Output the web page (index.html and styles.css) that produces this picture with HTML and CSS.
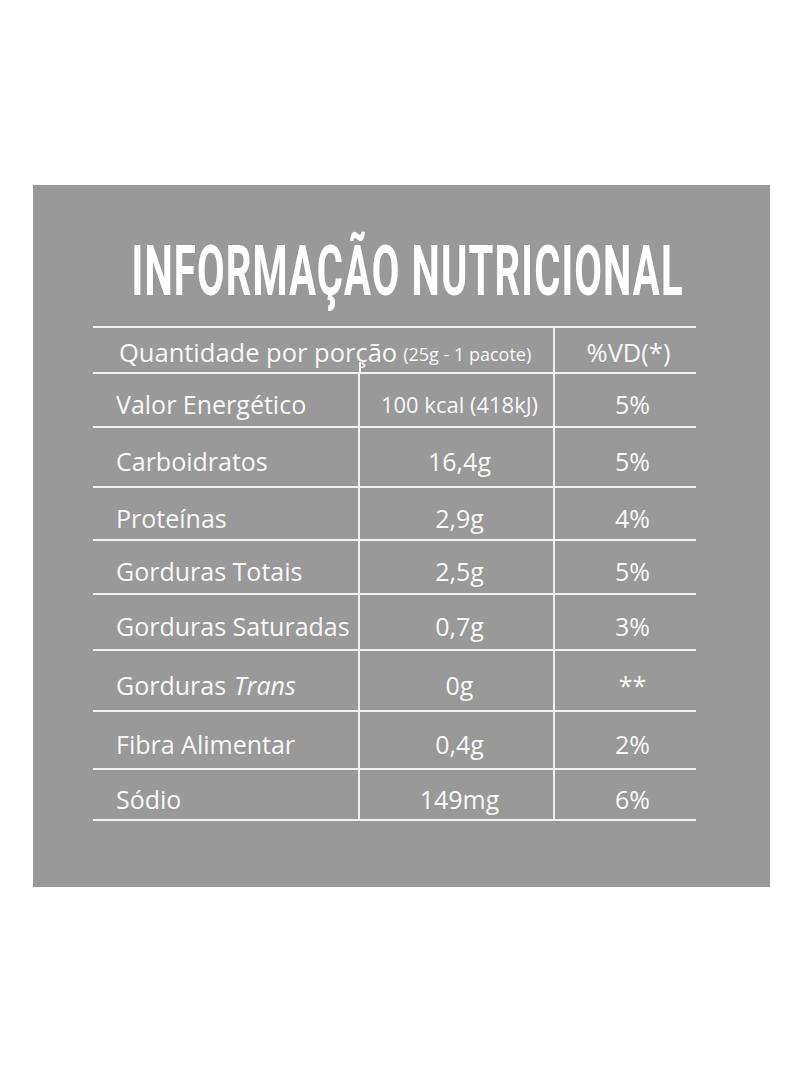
FILE: index.html
```html
<!DOCTYPE html>
<html lang="pt-BR">
<head>
<meta charset="utf-8">
<title>Informação Nutricional</title>
<link rel="stylesheet" href="styles.css">
</head>
<body>
<div class="page">
  <section class="panel">
    <div class="title-wrap"><h1 class="title">INFORMAÇÃO NUTRICIONAL</h1></div>
    <div class="table">
      <div class="cell head span">Quantidade por porção <small>(25g - 1 pacote)</small></div>
      <div class="cell head vd">%VD(*)</div>

      <div class="cell name">Valor Energético</div>
      <div class="cell qty small-qty">100 kcal (418kJ)</div>
      <div class="cell pct">5%</div>

      <div class="cell name">Carboidratos</div>
      <div class="cell qty">16,4g</div>
      <div class="cell pct">5%</div>

      <div class="cell name">Proteínas</div>
      <div class="cell qty">2,9g</div>
      <div class="cell pct">4%</div>

      <div class="cell name">Gorduras Totais</div>
      <div class="cell qty">2,5g</div>
      <div class="cell pct">5%</div>

      <div class="cell name">Gorduras Saturadas</div>
      <div class="cell qty">0,7g</div>
      <div class="cell pct">3%</div>

      <div class="cell name">Gorduras <em>Trans</em></div>
      <div class="cell qty">0g</div>
      <div class="cell pct">**</div>

      <div class="cell name">Fibra Alimentar</div>
      <div class="cell qty">0,4g</div>
      <div class="cell pct">2%</div>

      <div class="cell name">Sódio</div>
      <div class="cell qty">149mg</div>
      <div class="cell pct">6%</div>
    </div>
  </section>
</div>
</body>
</html>
```
FILE: styles.css
```css
html, body {
  margin: 0;
  padding: 0;
  background: #ffffff;
}

.page {
  padding-top: 185px;
  padding-left: 33px;
  height: 1066px;
  box-sizing: border-box;
}

.panel {
  width: 737px;
  height: 702px;
  box-sizing: border-box;
  background: #999999;
  padding: 51px 74px 0 60px;
  color: #f8f8f8;
  font-family: "Open Sans", "Noto Sans", sans-serif;
}

.title-wrap {
  display: flex;
  justify-content: center;
  margin-left: 12px;
  margin-right: -14px;
  height: 70px;
}

.title {
  margin: 0;
  display: inline-block;
  white-space: nowrap;
  font-family: Roboto, "Liberation Sans", sans-serif;
  font-weight: 700;
  font-size: 70px;
  line-height: 70px;
  letter-spacing: 2px;
  color: #ffffff;
  transform: scaleX(0.572);
  transform-origin: center;
}

.table {
  margin-top: 20px;
  display: grid;
  grid-template-columns: 267px 195px 141px;
  grid-template-rows: 46px 54px 60px 53px 54px 56px 61px 58px 51px;
  border-top: 2px solid #f2f2f2;
}

.cell {
  display: flex;
  align-items: center;
  box-sizing: border-box;
  border-bottom: 2px solid #f2f2f2;
  font-size: 25px;
  padding-top: 8px;
  white-space: nowrap;
}

.head {
  padding-top: 4px;
  font-size: 25.5px;
}

.span {
  grid-column: 1 / 3;
  border-right: 2px solid #f2f2f2;
  padding-left: 26px;
  position: relative;
}

.span::after {
  content: "";
  position: absolute;
  left: 266px;
  bottom: -2px;
  width: 2px;
  height: 12px;
  background: #f2f2f2;
}

.span small {
  font-size: 18px;
  margin-left: 6px;
  padding-top: 3px;
}

.vd {
  justify-content: center;
  padding-left: 6px;
}

.name {
  padding-left: 23px;
  border-right: 2px solid #f2f2f2;
}

.name em {
  font-style: italic;
  margin-left: 8px;
}

.qty {
  justify-content: center;
  border-right: 2px solid #f2f2f2;
  padding-left: 6px;
}

.small-qty {
  font-size: 22px;
}

.pct {
  justify-content: center;
  padding-left: 14px;
}
```
